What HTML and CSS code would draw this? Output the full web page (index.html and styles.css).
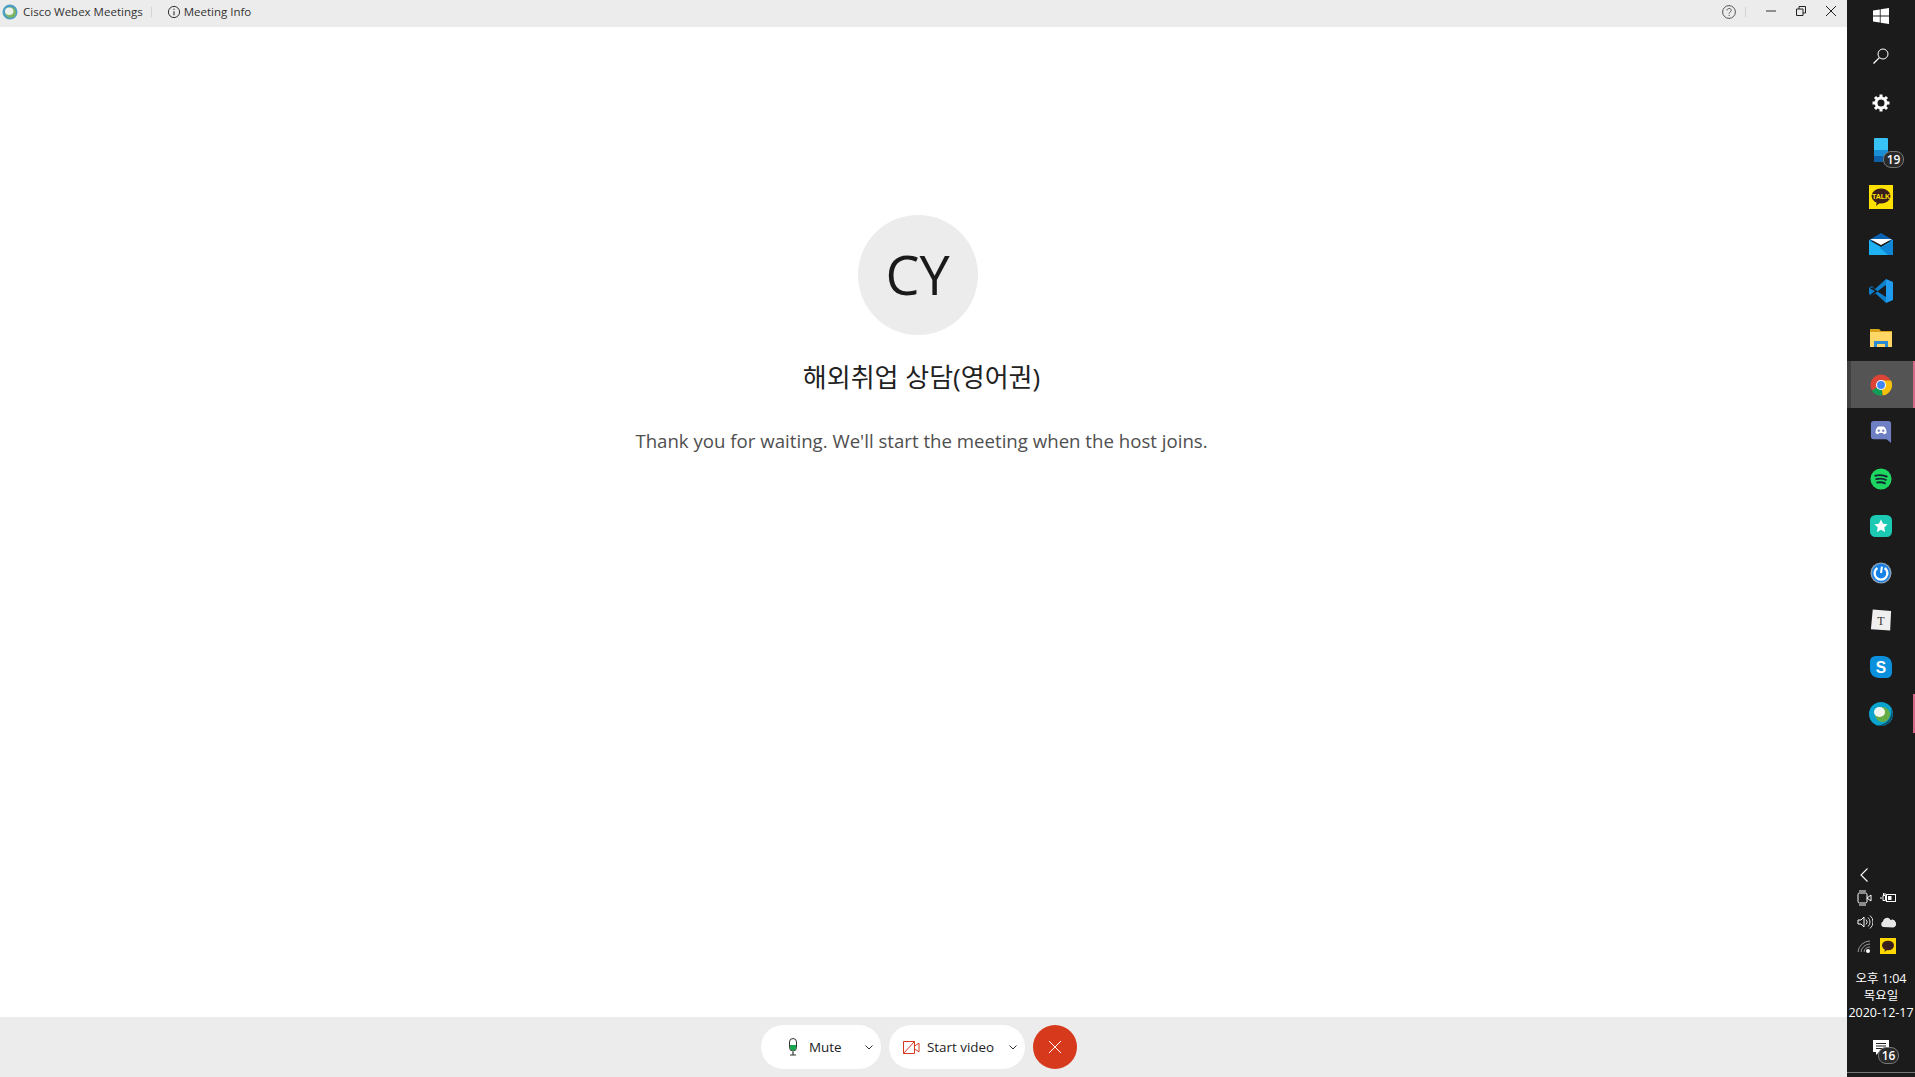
FILE: index.html
```html
<!DOCTYPE html>
<html lang="en">
<head>
    <meta charset="UTF-8">
    <meta name="viewport" content="width=device-width, initial-scale=1.0">
    <title>Cisco Webex Meetings</title>
    <link rel="stylesheet" href="styles.css">
</head>
<body>
    <div class="window">
        <header class="titlebar">
            <svg class="app-logo" viewBox="0 0 16 16">
                <circle cx="8" cy="8" r="7.5" fill="#4b9fc4"/>
                <circle cx="8.600" cy="8.400" r="5.400" fill="#7fb562"/>
                <ellipse cx="7.200" cy="7.200" rx="4.200" ry="3.800" fill="#eef1ea"/>
            </svg>
            <span class="app-name">Cisco Webex Meetings</span>
            <span class="bar-divider"></span>
            <svg class="info-icon" viewBox="0 0 14 14">
                <circle cx="7" cy="7" r="5.6" fill="none" stroke="#333" stroke-width="1"/>
                <path d="M7 6.200v4M7 3.800v1.200" stroke="#333" stroke-width="1.100" fill="none"/>
            </svg>
            <span class="meeting-info">Meeting Info</span>
            <div class="window-controls">
                <svg class="help-icon" viewBox="0 0 14 14">
                    <circle cx="7" cy="7" r="6.400" fill="none" stroke="#555" stroke-width="1"/>
                    <path d="M5 5.400c0-2.600 4.200-2.600 4.200 0 0 1.600-2.100 1.600-2.100 3.200M7.100 9.800v1.200" fill="none" stroke="#555" stroke-width="1"/>
                </svg>
                <span class="bar-divider controls-divider"></span>
                <svg class="ctl-icon ctl-min" viewBox="0 0 10 10"><path d="M0 5h10" stroke="#666" stroke-width="1.400"/></svg>
                <svg class="ctl-icon" viewBox="0 0 10 10"><path d="M.5 3h6.500v6.500h-6.500zM3 3V.5h6.500V7H7" fill="none" stroke="#222" stroke-width="1"/></svg>
                <svg class="ctl-icon" viewBox="0 0 10 10"><path d="M0 0l10 10M10 0L0 10" stroke="#222" stroke-width="1"/></svg>
            </div>
        </header>

        <main class="stage">
            <div class="avatar">CY</div>
            <h1 class="meeting-name">해외취업 상담(영어권)</h1>
            <p class="wait-msg">Thank you for waiting. We'll start the meeting when the host joins.</p>
        </main>

        <footer class="controls">
            <div class="pill pill-mute">
                <svg class="mic-icon" viewBox="0 0 10 18">
                    <rect x="1.500" y=".5" width="7" height="12.500" rx="3.500" fill="#fff" stroke="#333" stroke-width="1"/>
                    <path d="M2 7h6v2.500a3 3 0 0 1-6 0z" fill="#14a84c"/>
                    <path d="M5 13.500v3M2 17h6" stroke="#333" stroke-width="1.200" fill="none"/>
                </svg>
                <span class="pill-label">Mute</span>
                <svg class="chev" viewBox="0 0 8 5"><path d="M.5.5L4 4 7.500.5" fill="none" stroke="#333" stroke-width="1"/></svg>
            </div>
            <div class="pill pill-video">
                <svg class="cam-icon" viewBox="0 0 17 13">
                    <path d="M.5.5h11v12H.5zM11.500 5L16 2.200v8.600L11.500 8M.5 12.500L11.500.5" fill="none" stroke="#d63a1e" stroke-width="1"/>
                </svg>
                <span class="pill-label">Start video</span>
                <svg class="chev" viewBox="0 0 8 5"><path d="M.5.5L4 4 7.500.5" fill="none" stroke="#333" stroke-width="1"/></svg>
            </div>
            <div class="leave-btn">
                <svg class="leave-x" viewBox="0 0 12 12"><path d="M0 0l12 12M12 0L0 12" stroke="#fff" stroke-width="1"/></svg>
            </div>
        </footer>
    </div>

    <aside class="taskbar">
        <div class="tile tile-start">
            <svg class="ti ti-start" viewBox="0 0 16 16"><path d="M0 2.500l6.800-1v6H0zM7.600 1.300L16 0v7.500H7.600zM0 8.400h6.800v6l-6.800-1zM7.600 8.400H16V16l-8.400-1.300z" fill="#fff"/></svg>
        </div>
        <div class="tile">
            <svg class="ti ti-search" viewBox="0 0 16 16"><circle cx="10" cy="6" r="5" fill="none" stroke="#fff" stroke-width="1"/><path d="M6.400 9.600L.5 15.500" stroke="#fff" stroke-width="1.300"/></svg>
        </div>
        <div class="tile">
            <svg class="ti ti-gear" viewBox="0 0 18 18">
                <circle cx="9" cy="9" r="5" fill="none" stroke="#fff" stroke-width="3"/>
                <path d="M9 .5v4M9 13.500v4M.5 9h4M13.500 9h4M3 3l2.800 2.800M12.200 12.200L15 15M15 3l-2.800 2.800M5.800 12.200L3 15" stroke="#fff" stroke-width="3"/>
            </svg>
        </div>
        <div class="tile">
            <svg class="ti ti-phone" viewBox="0 0 14 24">
                <rect width="14" height="24" rx="1" fill="#37c3f5"/>
                <rect y="12" width="14" height="6" fill="#1a8fd6"/>
                <rect y="18" width="14" height="6" fill="#0f5fa8"/>
            </svg>
            <span class="badge">19</span>
        </div>
        <div class="tile">
            <svg class="ti ti-kakao" viewBox="0 0 24 24">
                <rect width="24" height="24" fill="#ffe100"/>
                <ellipse cx="12" cy="11" rx="9.500" ry="7.500" fill="#3a1d1d"/>
                <path d="M8 16l-1 5 5-4z" fill="#3a1d1d"/>
                <text x="12" y="13.500" class="kakao-txt">TALK</text>
            </svg>
        </div>
        <div class="tile">
            <svg class="ti ti-mail" viewBox="0 0 24 22">
                <path d="M0 7L12 0l12 7v1H0z" fill="#0a62b0"/>
                <path d="M0 7l12 7 12-7v15H0z" fill="#1fb2f2"/>
                <path d="M1 6h22L12 12z" fill="#fff"/>
                <path d="M24 8v14h-5L11 15z" fill="#0f86d6"/>
            </svg>
        </div>
        <div class="tile">
            <svg class="ti ti-code" viewBox="0 0 24 24">
                <path d="M17 0l7 3v18l-7 3V0z" fill="#1f9cf0"/>
                <path d="M17 0v6L8.500 12.300 3 8 1 9.500 6 12l-5 4 2 1 5.500-4.500L17 18v6L6 14 3 17 0 15V9l3-2 3 3z" fill="#0d7fcb"/>
            </svg>
        </div>
        <div class="tile">
            <svg class="ti ti-folder" viewBox="0 0 22 18">
                <path d="M0 0h9l2 2h11v16H0z" fill="#d9a21b"/>
                <rect y="3" width="22" height="15" fill="#ffd766"/>
                <path d="M4 18v-6h14v6h-3v-3H7v3z" fill="#2a8ad4"/>
            </svg>
        </div>
        <div class="tile tile-active">
            <svg class="ti ti-round" viewBox="0 0 24 24">
                <circle cx="12" cy="12" r="11.500" fill="#db4437"/>
                <path d="M12 12L2 18A11.500 11.500 0 0 0 14 23.300z" fill="#0f9d58"/>
                <path d="M12 12l2 11.300A11.500 11.500 0 0 0 23 7H12z" fill="#f4c20d"/>
                <circle cx="12" cy="12" r="5.500" fill="#fff"/>
                <circle cx="12" cy="12" r="4.300" fill="#4285f4"/>
            </svg>
        </div>
        <div class="tile">
            <svg class="ti ti-round" viewBox="0 0 22 24">
                <path d="M3 0h16a3 3 0 0 1 3 3v21l-5-4H3a3 3 0 0 1-3-3V3a3 3 0 0 1 3-3z" fill="#6f7fc4"/>
                <path d="M5 13c0-4 1-6 3.500-7h5c2.500 1 3.500 3 3.500 7-1 1-2 1.500-3 1.500l-1-1.500h-4l-1 1.500C7 14.500 6 14 5 13z" fill="#fff"/>
                <circle cx="8.500" cy="10.500" r="1.300" fill="#6f7fc4"/><circle cx="13.500" cy="10.500" r="1.300" fill="#6f7fc4"/>
            </svg>
        </div>
        <div class="tile">
            <svg class="ti ti-round" viewBox="0 0 24 24">
                <circle cx="12" cy="12" r="11.500" fill="#1ed760"/>
                <path d="M5 8.500c5-1.300 10-1 14 1.200M6 12.300c4-1 8.500-.8 12 1M7 16c3.500-.8 7-.6 10 1" fill="none" stroke="#123" stroke-width="2"/>
            </svg>
        </div>
        <div class="tile">
            <svg class="ti ti-round" viewBox="0 0 24 24">
                <rect width="24" height="24" rx="6" fill="#1ccab3"/>
                <path d="M12 5l2.200 4.600 5 .6-3.700 3.400 1 5-4.500-2.500-4.500 2.500 1-5-3.700-3.400 5-.6z" fill="#fff"/>
            </svg>
        </div>
        <div class="tile">
            <svg class="ti ti-round" viewBox="0 0 24 24">
                <circle cx="12" cy="12" r="11.500" fill="#8aa0b8"/>
                <circle cx="12" cy="12" r="10" fill="#1681e6"/>
                <path d="M8 6.500a7 7 0 1 0 8 0" fill="none" stroke="#fff" stroke-width="2.600"/>
                <path d="M13 5l-1 7" stroke="#fff" stroke-width="2.200"/>
            </svg>
        </div>
        <div class="tile">
            <svg class="ti ti-round" viewBox="0 0 24 24">
                <path d="M3 .5l20 1.800-1 21.200-21-1.500z" fill="#efefef"/>
                <text x="12" y="17" class="notion-t">T</text>
            </svg>
        </div>
        <div class="tile">
            <svg class="ti ti-round" viewBox="0 0 24 24">
                <path d="M6 0h8c6 0 10 4 10 10v8a6 6 0 0 1-6 6h-8C4 24 0 20 0 14V6a6 6 0 0 1 6-6z" fill="#0a90dc"/>
                <text x="12" y="18" class="skype-s">S</text>
            </svg>
        </div>
        <div class="tile tile-pinned">
            <svg class="ti ti-webex" viewBox="0 0 24 24">
                <circle cx="12" cy="12" r="12" fill="#0aa4cf"/>
                <path d="M22 6a12 12 0 0 1-14 17.400A14 14 0 0 0 22 6z" fill="#0b4f6c"/>
                <circle cx="13.500" cy="12.500" r="7.500" fill="#66ad45"/>
                <ellipse cx="10.500" cy="10" rx="5.500" ry="5" fill="#f4f6f0"/>
            </svg>
        </div>

        <div class="tray">
            <svg class="tray-chevron" viewBox="0 0 8 14"><path d="M7.500.5L1 7l6.500 6.500" fill="none" stroke="#fff" stroke-width="1.100"/></svg>
            <div class="tray-grid">
                <svg class="tray-icon" viewBox="0 0 16 16">
                    <rect x="1" y="3" width="9" height="10" rx="1.500" fill="none" stroke="#fff" stroke-width="1"/>
                    <path d="M10 8l4-3v6zM2 1h7M2 15h7" fill="none" stroke="#fff" stroke-width="1"/>
                </svg>
                <svg class="tray-icon" viewBox="0 0 16 16">
                    <path d="M0 8h2M3 5.500h2.500v5H3zM3.500 3v2.500M5 3v2.500" fill="none" stroke="#fff" stroke-width="1"/>
                    <rect x="6.500" y="4.500" width="9" height="7" fill="none" stroke="#fff" stroke-width="1"/>
                    <rect x="8" y="6" width="3.500" height="4" fill="#fff"/>
                </svg>
                <svg class="tray-icon" viewBox="0 0 16 16">
                    <path d="M1 6h3l3-3v10l-3-3H1z" fill="none" stroke="#fff" stroke-width="1"/>
                    <path d="M9 5.500a3.500 3.500 0 0 1 0 5M11 3.500a6 6 0 0 1 0 9M13 1.500a8.500 8.500 0 0 1 0 13" fill="none" stroke="#ddd" stroke-width="1"/>
                </svg>
                <svg class="tray-icon" viewBox="0 0 16 16">
                    <path d="M3 13a3 3 0 0 1 0-5.500 4 4 0 0 1 7.500-1.500 3.500 3.500 0 0 1 3 7.500z" fill="#e8e8e8"/>
                </svg>
                <svg class="tray-icon" viewBox="0 0 16 16">
                    <path d="M1 14A12 12 0 0 1 13 3M4 14a9 9 0 0 1 9-8M7 14a6 6 0 0 1 6-5" fill="none" stroke="#999" stroke-width="1"/>
                    <circle cx="11" cy="13" r="2" fill="#fff"/>
                </svg>
                <svg class="tray-icon" viewBox="0 0 16 16">
                    <rect width="16" height="16" fill="#ffd800"/>
                    <ellipse cx="8" cy="7.500" rx="6" ry="4.800" fill="#3a1d1d"/>
                    <path d="M5 11l-.5 3 3-2.500z" fill="#3a1d1d"/>
                </svg>
            </div>
            <div class="clock">
                <span>오후 1:04</span>
                <span>목요일</span>
                <span>2020-12-17</span>
            </div>
            <div class="notif">
                <svg class="notif-icon" viewBox="0 0 16 16">
                    <path d="M0 0h16v12H6l-3 3v-3H0z" fill="#fff"/>
                    <path d="M3 3.500h10M3 6h10M3 8.500h10" stroke="#222" stroke-width="1"/>
                </svg>
                <span class="badge">16</span>
            </div>
        </div>
    </aside>
</body>
</html>
```

FILE: styles.css
```css
body {
    margin: 0;
    height: 1077px;
    display: flex;
    overflow: hidden;
    font-family: 'Open Sans', 'Noto Sans CJK KR', sans-serif;
    background: #fff;
    color: #222;
}

.window {
    flex: 1;
    min-width: 0;
    display: flex;
    flex-direction: column;
}

/* title bar */
.titlebar {
    height: 27px;
    padding-bottom: 4px;
    box-sizing: border-box;
    background: #ececec;
    display: flex;
    align-items: center;
    font-size: 11.5px;
    color: #333;
    flex-shrink: 0;
}

.app-logo {
    width: 16px;
    height: 16px;
    margin-left: 2px;
    margin-right: 5px;
}

.app-name,
.meeting-info {
    white-space: nowrap;
}

.bar-divider {
    width: 1px;
    height: 10px;
    background: #d4d4d4;
    margin-left: 8px;
}

.info-icon {
    width: 14px;
    height: 14px;
    margin-left: 15px;
    margin-right: 3px;
}

.window-controls {
    margin-left: auto;
    display: flex;
    align-items: center;
    padding-right: 11px;
}

.help-icon {
    width: 14px;
    height: 14px;
}

.controls-divider {
    margin-left: 9px;
    margin-right: 20px;
}

.ctl-icon {
    width: 10px;
    height: 10px;
    margin-left: 20px;
    margin-top: -2px;
}

.ctl-min {
    margin-left: 0;
}

/* middle */
.stage {
    flex: 1;
    padding-top: 188px;
    display: flex;
    flex-direction: column;
    align-items: center;
}

.avatar {
    width: 120px;
    height: 120px;
    border-radius: 50%;
    background: #ececec;
    display: flex;
    align-items: center;
    justify-content: center;
    font-size: 54px;
    font-weight: 400;
    color: #1a1a1a;
    margin-right: 12px;
    padding-bottom: 3px;
    box-sizing: border-box;
}

.meeting-name {
    margin: 24px 4px 0 0;
    font-size: 26px;
    font-weight: 400;
    line-height: 36px;
    color: #222;
}

.wait-msg {
    margin: 31px 4px 0 0;
    font-size: 18.65px;
    line-height: 30px;
    color: #4f4f4f;
}

/* bottom controls */
.controls {
    height: 60px;
    background: #ececec;
    flex-shrink: 0;
    display: flex;
    align-items: center;
    justify-content: center;
    gap: 8px;
    padding-right: 9px;
    font-size: 13.4px;
}

.pill {
    height: 44px;
    background: #fff;
    border-radius: 22px;
    display: flex;
    align-items: center;
    position: relative;
}

.pill-mute {
    width: 120px;
    padding-left: 27px;
    box-sizing: border-box;
}

.pill-video {
    width: 136px;
    padding-left: 14px;
    box-sizing: border-box;
}

.mic-icon {
    width: 10px;
    height: 18px;
    margin-right: 11px;
}

.cam-icon {
    width: 17px;
    height: 13px;
    margin-right: 7px;
}

.pill-label {
    white-space: nowrap;
    color: #222;
}

.chev {
    position: absolute;
    right: 8px;
    top: 20px;
    width: 8px;
    height: 5px;
}

.leave-btn {
    width: 44px;
    height: 44px;
    border-radius: 50%;
    background: #d7391c;
    display: flex;
    align-items: center;
    justify-content: center;
}

.leave-x {
    width: 12px;
    height: 12px;
}

/* windows taskbar */
.taskbar {
    width: 68px;
    flex-shrink: 0;
    background: #1b1b1b;
    display: flex;
    flex-direction: column;
    align-items: stretch;
    border-bottom: 1px solid #777;
    height: 1072px;
    box-shadow: 0 5px 0 #1b1b1b;
}

.tile {
    height: 47px;
    flex-shrink: 0;
    display: flex;
    align-items: center;
    justify-content: center;
    position: relative;
}

.tile-start {
    height: 32px;
}

.tile-active {
    background: #545454;
    border-left: 4px solid #3f3f3f;
    border-right: 2px solid #d8688a;
    padding-right: 2px;
}

.tile-pinned::after {
    content: "";
    position: absolute;
    right: 0;
    top: 4px;
    bottom: 4px;
    width: 2px;
    background: #d8688a;
}

.ti-start,
.ti-search {
    width: 16px;
    height: 16px;
}

.ti-gear {
    width: 18px;
    height: 18px;
}

.ti-phone {
    width: 14px;
    height: 24px;
}

.ti-kakao,
.ti-mail,
.ti-code,
.ti-webex {
    width: 24px;
    height: 24px;
}

.ti-mail {
    height: 22px;
}

.ti-folder {
    width: 22px;
    height: 18px;
}

.ti-round {
    width: 22px;
    height: 22px;
}

.kakao-txt {
    font-size: 7px;
    font-weight: 700;
    fill: #ffe100;
    text-anchor: middle;
    font-family: 'Liberation Sans', sans-serif;
}

.notion-t {
    font-size: 13px;
    fill: #333;
    text-anchor: middle;
    font-family: 'Liberation Serif', serif;
}

.skype-s {
    font-size: 17px;
    font-weight: 700;
    fill: #fff;
    text-anchor: middle;
    font-family: 'Liberation Sans', sans-serif;
}

.badge {
    position: absolute;
    left: 36px;
    top: 25px;
    width: 19px;
    height: 15px;
    border-radius: 8px;
    background: #2a2a2a;
    border: 1px solid #777;
    color: #fff;
    font-size: 12px;
    font-weight: 600;
    line-height: 15px;
    text-align: center;
}

.tray {
    margin-top: auto;
    display: flex;
    flex-direction: column;
    color: #fff;
}

.tray-chevron {
    width: 8px;
    height: 14px;
    margin-left: 13px;
    margin-bottom: 8px;
}

.tray-grid {
    display: grid;
    grid-template-columns: 16px 16px;
    column-gap: 7px;
    row-gap: 8px;
    padding-left: 10px;
}

.tray-icon {
    width: 16px;
    height: 16px;
}

.clock {
    margin-top: 16px;
    display: flex;
    flex-direction: column;
    align-items: center;
    font-size: 12.5px;
    line-height: 17px;
    white-space: nowrap;
}

.notif {
    height: 45px;
    position: relative;
    margin-top: 6px;
}

.notif-icon {
    position: absolute;
    left: 26px;
    top: 13px;
    width: 16px;
    height: 16px;
}

.notif .badge {
    left: 31px;
    top: 20px;
}
```
